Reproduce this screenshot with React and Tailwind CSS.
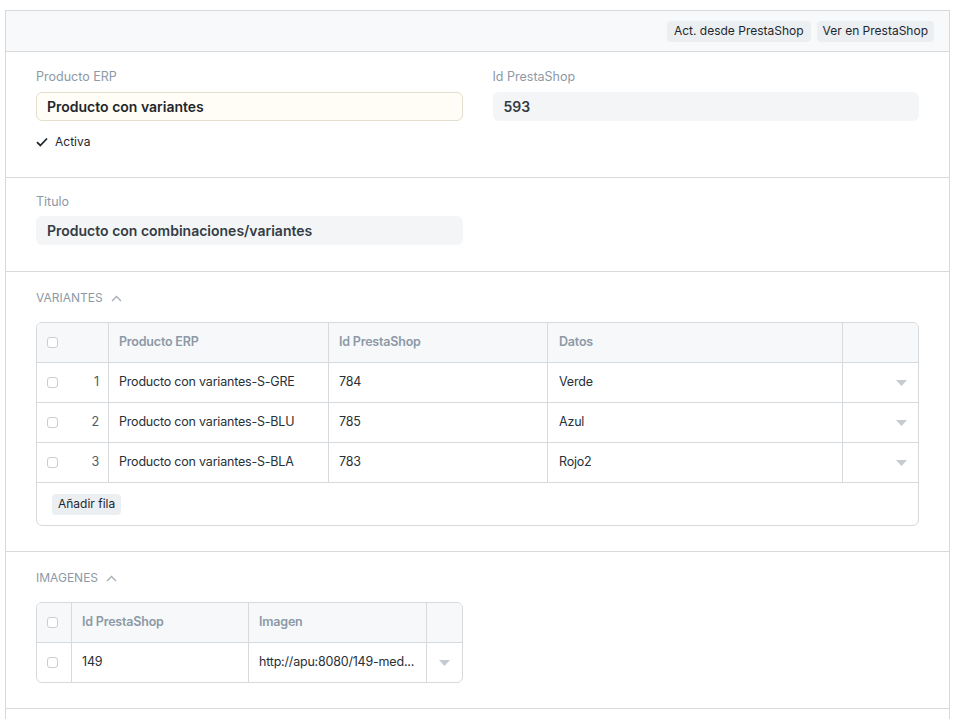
import React from "react";

const font = { fontFamily: "Inter, 'Noto Sans', 'Liberation Sans', sans-serif" };

function Checkbox() {
  return <span className="inline-block w-[11px] h-[11px] rounded-[3px] border border-[#c9ced3] bg-white" />;
}

function Caret() {
  return (
    <svg width="11" height="6" viewBox="0 0 11 6" className="block">
      <path d="M0 0 L11 0 L5.5 6 Z" fill="#c6cbd0" />
    </svg>
  );
}

function ChevronUp() {
  return (
    <svg width="11" height="7" viewBox="0 0 11 7" className="block">
      <path d="M1 6 L5.5 1.5 L10 6" fill="none" stroke="#a6afb8" strokeWidth="1.3" />
    </svg>
  );
}

function Label({ children }) {
  return <div className="text-[12.5px] leading-[16px] text-[#8d99a6] mb-[7px]">{children}</div>;
}

function SectionHead({ children }) {
  return (
    <div className="flex items-center gap-[8px] h-[16px] text-[12px] leading-[16px] text-[#8d99a6]">
      <span>{children}</span>
      <ChevronUp />
    </div>
  );
}

const rows = [
  { n: 1, p: "Producto con variantes-S-GRE", id: "784", d: "Verde" },
  { n: 2, p: "Producto con variantes-S-BLU", id: "785", d: "Azul" },
  { n: 3, p: "Producto con variantes-S-BLA", id: "783", d: "Rojo2" },
];

export default function App() {
  return (
    <div style={font} className="bg-white min-h-[719px] pt-[10px] px-[5px] text-[#1f272e]">
      <div className="border-x border-t border-[#d6dadd] min-h-[709px] flex flex-col">
        {/* header */}
        <div className="h-[41px] bg-[#f8f9fa] border-b border-[#d6dadd] flex items-center justify-end gap-[6px] pr-[15px]">
          <button className="h-[21px] px-[7px] rounded-[4px] bg-[#eceff2] text-[12px] text-[#1f272e]">
            Act. desde PrestaShop
          </button>
          <button className="h-[21px] px-[6px] rounded-[4px] bg-[#eceff2] text-[12px] text-[#1f272e]">
            Ver en PrestaShop
          </button>
        </div>

        {/* section 1 */}
        <div className="border-b border-[#d6dadd] px-[30px] pt-[17px] pb-[27px] grid grid-cols-2 gap-[30px]">
          <div>
            <Label>Producto ERP</Label>
            <div className="h-[29px] rounded-[6px] bg-[#fffdf5] border border-[#e3dece] flex items-center px-[10px] text-[14px] font-semibold text-[#1f272e]">
              Producto con variantes
            </div>
            <div className="mt-[13px] h-[16px] flex items-center gap-[7px] text-[12px] text-[#1f272e]">
              <svg width="12" height="10" viewBox="0 0 12 10" className="block">
                <path d="M1 5.2 L4.3 8.5 L11 1.5" fill="none" stroke="#1f272e" strokeWidth="1.8" />
              </svg>
              <span>Activa</span>
            </div>
          </div>
          <div>
            <Label>Id PrestaShop</Label>
            <div className="h-[29px] rounded-[6px] bg-[#f3f5f7] flex items-center px-[11px] text-[14px] font-semibold text-[#333c44]">
              593
            </div>
          </div>
        </div>

        {/* section 2 */}
        <div className="border-b border-[#d6dadd] px-[30px] pt-[16px] pb-[26px] grid grid-cols-2 gap-[30px]">
          <div>
            <div className="text-[12.5px] leading-[16px] text-[#8d99a6] mb-[6px]">Titulo</div>
            <div className="h-[29px] rounded-[6px] bg-[#f3f5f7] flex items-center px-[11px] text-[14px] font-semibold text-[#333c44]">
              Producto con combinaciones/variantes
            </div>
          </div>
          <div />
        </div>

        {/* section 3 */}
        <div className="border-b border-[#d6dadd] px-[30px] pt-[18px] pb-[25px]">
          <SectionHead>VARIANTES</SectionHead>
          <div className="mt-[16px] border border-[#d6dadd] rounded-[6px] overflow-hidden text-[12.5px] tracking-[-0.2px]">
            <div className="grid grid-cols-[72px_220px_219px_295px_1fr] h-[40px] bg-[#f6f8fa] border-b border-[#d6dadd] font-semibold text-[#8d99a6]">
              <div className="border-r border-[#d6dadd] flex items-center pl-[10px]"><Checkbox /></div>
              <div className="border-r border-[#d6dadd] flex items-center pl-[10px]">Producto ERP</div>
              <div className="border-r border-[#d6dadd] flex items-center pl-[10px]">Id PrestaShop</div>
              <div className="border-r border-[#d6dadd] flex items-center pl-[11px]">Datos</div>
              <div />
            </div>
            {rows.map((r) => (
              <div key={r.n} className="grid grid-cols-[72px_220px_219px_295px_1fr] h-[40px] border-b border-[#d6dadd] text-[#283038]">
                <div className="border-r border-[#d6dadd] flex items-center justify-between pl-[10px] pr-[9px]">
                  <Checkbox />
                  <span className="text-[#4c5a67]">{r.n}</span>
                </div>
                <div className="border-r border-[#d6dadd] flex items-center pl-[10px]">{r.p}</div>
                <div className="border-r border-[#d6dadd] flex items-center pl-[10px]">{r.id}</div>
                <div className="border-r border-[#d6dadd] flex items-center pl-[11px]">{r.d}</div>
                <div className="flex items-center justify-end pr-[11px]"><Caret /></div>
              </div>
            ))}
            <div className="h-[42px] flex items-center pl-[15px] tracking-normal">
              <button className="h-[21px] px-[6px] rounded-[4px] bg-[#eceff2] text-[12px] text-[#1f272e]">
                Añadir fila
              </button>
            </div>
          </div>
        </div>

        {/* section 4 */}
        <div className="border-b border-[#d6dadd] px-[30px] pt-[18px] pb-[25px] grid grid-cols-2 gap-[30px]">
          <div>
            <SectionHead>IMAGENES</SectionHead>
            <div className="mt-[16px] border border-[#d6dadd] rounded-[6px] overflow-hidden text-[12.5px] tracking-[-0.2px]">
              <div className="grid grid-cols-[35px_177px_178px_1fr] h-[40px] bg-[#f6f8fa] border-b border-[#d6dadd] font-semibold text-[#8d99a6]">
                <div className="border-r border-[#d6dadd] flex items-center pl-[10px]"><Checkbox /></div>
                <div className="border-r border-[#d6dadd] flex items-center pl-[10px]">Id PrestaShop</div>
                <div className="border-r border-[#d6dadd] flex items-center pl-[10px]">Imagen</div>
                <div />
              </div>
              <div className="grid grid-cols-[35px_177px_178px_1fr] h-[39px] text-[#283038]">
                <div className="border-r border-[#d6dadd] flex items-center pl-[10px]"><Checkbox /></div>
                <div className="border-r border-[#d6dadd] flex items-center pl-[10px]">149</div>
                <div className="border-r border-[#d6dadd] flex items-center pl-[10px] whitespace-nowrap">
                  http://apu:8080/149-med...
                </div>
                <div className="flex items-center justify-center"><Caret /></div>
              </div>
            </div>
          </div>
          <div />
        </div>
        <div className="flex-1" />
      </div>
    </div>
  );
}
